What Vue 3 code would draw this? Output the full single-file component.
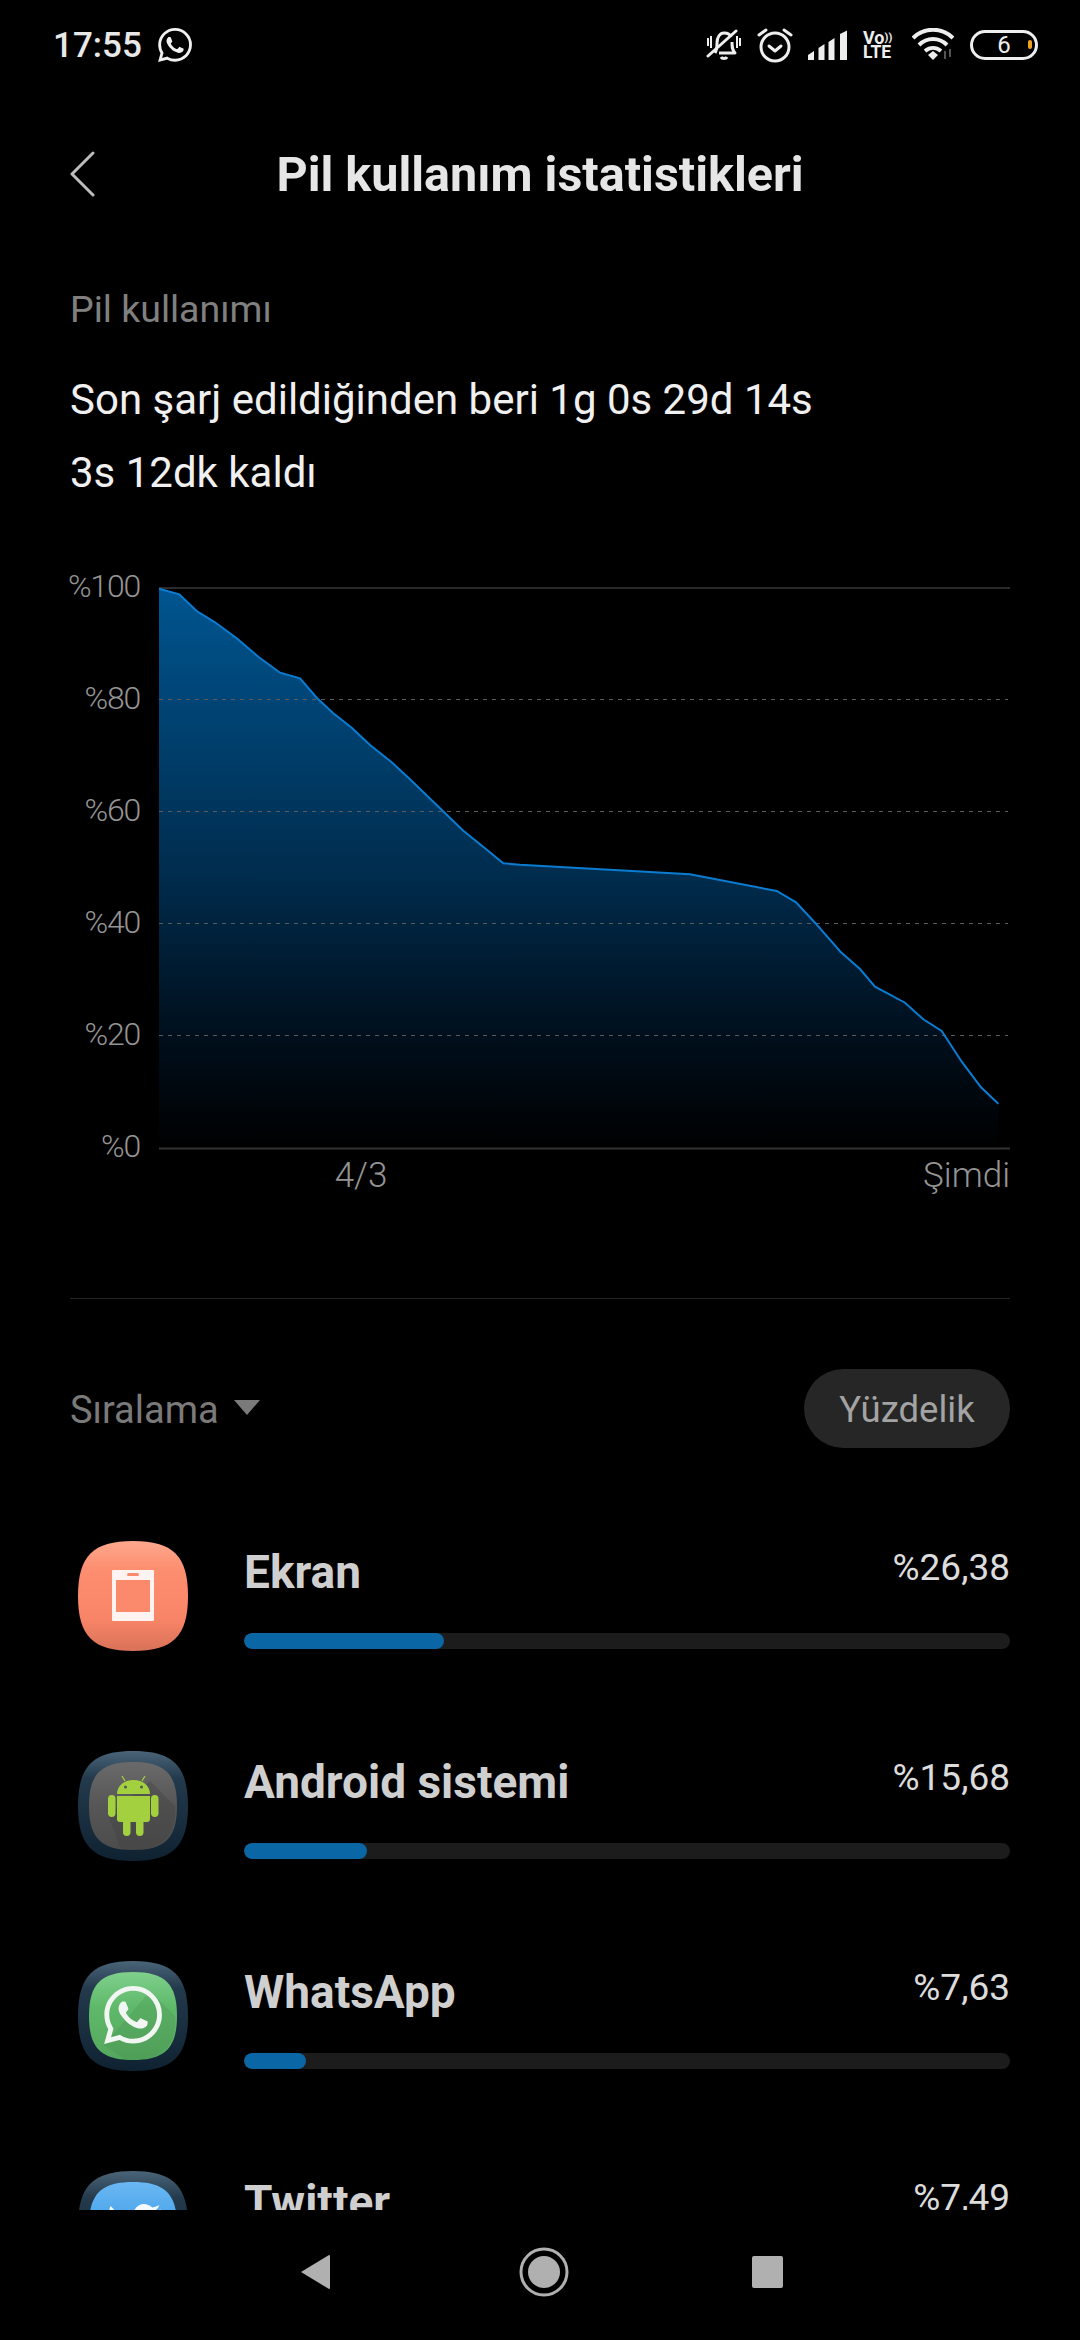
<script setup>
const linePts = '159,588.7 179.3,594.3 196.7,611 215,622.3 236.7,638.3 258.3,656.7 280,672.7 300,678.3 316.7,697.7 332.7,712.7 351.7,727.7 370,745 391.7,762.3 410,779.3 440,808.3 463.3,830.7 485,848.3 503.3,863.3 520,864.7 690,874.3 776.7,891 796,902.3 815,922.7 840.7,952 860,969 875,986.7 905,1002.7 923.3,1019.3 941.7,1031 961.7,1061.7 981,1087.3 998.3,1103.7'
const areaPts = linePts + ' 998.3,1148 159,1148'
const grid = [699.5, 811.5, 923.5, 1035.5]
const axis = [
  { t: '%100', y: 597 },
  { t: '%80', y: 709 },
  { t: '%60', y: 821 },
  { t: '%40', y: 933 },
  { t: '%20', y: 1045 },
  { t: '%0', y: 1157 }
]
const rows = [
  { name: 'Ekran', pct: '%26,38', w: 200, icon: 'screen' },
  { name: 'Android sistemi', pct: '%15,68', w: 123, icon: 'android' },
  { name: 'WhatsApp', pct: '%7,63', w: 62, icon: 'whatsapp' },
  { name: 'Twitter', pct: '%7,49', w: 60, icon: 'twitter' }
]
const sq = 'M55 0C95 0 110 15 110 55C110 95 95 110 55 110C15 110 0 95 0 55C0 15 15 0 55 0Z'
const sqIn = 'M55 11C87 11 99 23 99 55C99 87 87 99 55 99C23 99 11 87 11 55C11 23 23 11 55 11Z'
const wa = 'M17.472 14.382c-.297-.149-1.758-.867-2.03-.967-.273-.099-.471-.148-.67.15-.197.297-.767.966-.94 1.164-.173.199-.347.223-.644.075-.297-.15-1.255-.463-2.39-1.475-.883-.788-1.48-1.761-1.653-2.059-.173-.297-.018-.458.13-.606.134-.133.298-.347.446-.52.149-.174.198-.298.298-.497.099-.198.05-.371-.025-.52-.075-.149-.669-1.612-.916-2.207-.242-.579-.487-.5-.669-.51-.173-.008-.371-.01-.57-.01-.198 0-.52.074-.792.372-.272.297-1.04 1.016-1.04 2.479 0 1.462 1.065 2.875 1.213 3.074.149.198 2.096 3.2 5.077 4.487.709.306 1.262.489 1.694.625.712.227 1.36.195 1.871.118.571-.085 1.758-.719 2.006-1.413.248-.694.248-1.289.173-1.413-.074-.124-.272-.198-.57-.347m-5.421 7.403h-.004a9.87 9.87 0 01-5.031-1.378l-.361-.214-3.741.982.998-3.648-.235-.374a9.86 9.86 0 01-1.51-5.26c.001-5.45 4.436-9.884 9.888-9.884 2.64 0 5.122 1.03 6.988 2.898a9.825 9.825 0 012.893 6.994c-.003 5.45-4.437 9.884-9.885 9.884m8.413-18.297A11.815 11.815 0 0012.05 0C5.495 0 .16 5.335.157 11.892c0 2.096.547 4.142 1.588 5.945L.057 24l6.305-1.654a11.882 11.882 0 005.683 1.448h.005c6.554 0 11.89-5.335 11.893-11.893a11.821 11.821 0 00-3.48-8.413z'
const tw = 'M23.953 4.57a10 10 0 01-2.825.775 4.958 4.958 0 002.163-2.723c-.951.555-2.005.959-3.127 1.184a4.92 4.92 0 00-8.384 4.482C7.69 8.095 4.067 6.13 1.64 3.162a4.822 4.822 0 00-.666 2.475c0 1.71.87 3.213 2.188 4.096a4.904 4.904 0 01-2.228-.616v.06a4.923 4.923 0 003.946 4.827 4.996 4.996 0 01-2.212.085 4.936 4.936 0 004.604 3.417 9.867 9.867 0 01-6.102 2.105c-.39 0-.779-.023-1.17-.067a13.995 13.995 0 007.557 2.209c9.053 0 13.998-7.496 13.998-13.985 0-.21 0-.42-.015-.63A9.935 9.935 0 0024 4.59z'
</script>

<template>
  <div class="screen">
    <div class="scroll">
      <div class="status">
        <div class="status-left">
          <span class="clock">17:55</span>
          <svg class="st-wa" width="34" height="34" viewBox="0 0 24 24"><path :d="wa" fill="#f0f0f0" /></svg>
        </div>
        <div class="status-right">
          <svg width="36" height="36" viewBox="0 0 36 36" fill="none" stroke="#eee" stroke-width="3">
            <path d="M9 26c2-3 2-6 2-10 0-6 3-10 7-10 3 0 6 1 7 4M26 15c0 5 0 8 3 11H13" stroke-linejoin="round" />
            <path d="M15 30c1 2 5 2 6 0" stroke-width="3" />
            <path d="M2 29L30 4" stroke-linecap="round" />
            <path d="M2 11v8M5 9v12M31 9v12M34 11v8" stroke-width="2" />
          </svg>
          <svg width="36" height="36" viewBox="0 0 36 36" fill="none" stroke="#eee" stroke-width="3">
            <circle cx="18" cy="20" r="14" />
            <path d="M12 19l6 5 6-5" stroke-linecap="round" stroke-linejoin="round" />
            <path d="M2 8l7-5M34 8l-7-5" stroke-linecap="round" />
          </svg>
          <svg width="40" height="30" viewBox="0 0 40 30" fill="#eee">
            <path d="M0 30v-5l6-4v9zM10.500 30V18l6-4v16zM20.500 30V12l6-4v22zM32 30V4l7-3.500V30z" />
          </svg>
          <div class="volte"><span class="vo">Vo<i>))</i></span><span class="lte">LTE</span></div>
          <svg width="42" height="34" viewBox="0 0 42 34" fill="none" stroke="#eee" stroke-width="4">
            <path d="M1 10C12-1 30-1 41 10" />
            <path d="M7 17C15 9 27 9 35 17" />
            <path d="M13 23C18 19 24 19 29 23" />
            <path d="M16 27l5-4 5 4-5 5z" fill="#eee" stroke="none" />
            <path d="M33 23v8M38 21v8" stroke="#555" stroke-width="2" />
          </svg>
          <div class="battery"><span>6</span><i></i></div>
        </div>
      </div>

      <div class="header">
        <svg class="back" width="26" height="46" viewBox="0 0 26 46" fill="none" stroke="#bdbdbd" stroke-width="3" stroke-linecap="round" stroke-linejoin="round">
          <path d="M23 2L2 23l21 21" />
        </svg>
        <div class="title">Pil kullanım istatistikleri</div>
        <div></div>
      </div>

      <div class="label">Pil kullanımı</div>
      <div class="desc">
        <div>Son şarj edildiğinden beri 1g 0s 29d 14s</div>
        <div>3s 12dk kaldı</div>
      </div>

      <svg class="chart" width="1080" height="670" viewBox="0 560 1080 670">
        <defs>
          <linearGradient id="area" x1="0" y1="588" x2="0" y2="1148" gradientUnits="userSpaceOnUse">
            <stop offset="0" stop-color="#005590" />
            <stop offset="0.5" stop-color="#002d4f" />
            <stop offset="0.8" stop-color="#000f1c" />
            <stop offset="1" stop-color="#000" />
          </linearGradient>
        </defs>
        <line x1="159" y1="588" x2="1010" y2="588" stroke="#2b2b2b" stroke-width="2" />
        <polygon :points="areaPts" fill="url(#area)" />
        <line v-for="g in grid" :key="g" x1="159" :y1="g" x2="1008" :y2="g" stroke="#5a5a5a" stroke-width="1" stroke-dasharray="4 5" />
        <line x1="159" y1="1148.500" x2="1010" y2="1148.500" stroke="#333" stroke-width="2" />
        <polyline :points="linePts" fill="none" stroke="#0a7cd2" stroke-width="2" />
        <text v-for="a in axis" :key="a.t" x="140" :y="a.y" text-anchor="end" class="axis">{{ a.t }}</text>
        <text x="361" y="1187" text-anchor="middle" class="axis-x">4/3</text>
        <text x="1010" y="1187" text-anchor="end" class="axis-x">Şimdi</text>
      </svg>

      <div class="divider"></div>

      <div class="sort">
        <div class="sort-left">
          <span>Sıralama</span>
          <i class="tri"></i>
        </div>
        <div class="pill">Yüzdelik</div>
      </div>

      <div class="list">
        <div v-for="r in rows" :key="r.name" class="row">
          <svg class="app" width="110" height="110" viewBox="0 0 110 110">
            <defs>
              <linearGradient id="gS" x1="0" y1="0" x2="0" y2="1">
                <stop offset="0" stop-color="#fea88d" />
                <stop offset="0.25" stop-color="#fd8e70" />
                <stop offset="0.7" stop-color="#f98568" />
                <stop offset="1" stop-color="#d87258" />
              </linearGradient>
              <linearGradient id="gF" x1="0" y1="0" x2="0" y2="1">
                <stop offset="0" stop-color="#4a6478" />
                <stop offset="0.25" stop-color="#233a4c" />
                <stop offset="1" stop-color="#0f2232" />
              </linearGradient>
              <linearGradient id="gW" x1="0" y1="0" x2="0" y2="1">
                <stop offset="0" stop-color="#7fd08c" />
                <stop offset="0.4" stop-color="#5fb96a" />
                <stop offset="1" stop-color="#54a75d" />
              </linearGradient>
              <linearGradient id="gA" x1="0" y1="0" x2="0" y2="1">
                <stop offset="0" stop-color="#6a6a6a" />
                <stop offset="0.5" stop-color="#565656" />
                <stop offset="1" stop-color="#4c4c4c" />
              </linearGradient>
              <linearGradient id="gT" x1="0" y1="0" x2="0" y2="1">
                <stop offset="0" stop-color="#6ab8f4" />
                <stop offset="0.4" stop-color="#4ea6ea" />
              </linearGradient>
            </defs>
            <template v-if="r.icon === 'screen'">
              <path :d="sq" fill="url(#gS)" />
              <path d="M35 29h40a1 1 0 011 1v49a1 1 0 01-1 1H35a1 1 0 01-1-1V30a1 1 0 011-1z" fill="#fdf4f1" />
              <rect x="38" y="39" width="34" height="32" fill="#fb8a6c" />
              <rect x="49" y="32" width="12" height="3" rx="1.500" fill="#fb8a6c" />
            </template>
            <template v-else-if="r.icon === 'android'">
              <path :d="sq" fill="url(#gF)" />
              <path :d="sqIn" fill="url(#gA)" />
              <path d="M72 30L97 55C99 80 88 99 55 99C50 99 46 98 42 97L38 84L30 64z" fill="#3f3f3f" opacity="0.35" />
              <g fill="#a3d03f">
                <path d="M39 43c0-8 7-14 16.500-14S72 35 72 43z" />
                <path d="M39 45h33v23a3 3 0 01-3 3H42a3 3 0 01-3-3z" />
                <rect x="30" y="44" width="7.500" height="22" rx="3.700" />
                <rect x="73" y="44" width="7.500" height="22" rx="3.700" />
                <rect x="45" y="68" width="7.500" height="17" rx="3.700" />
                <rect x="58" y="68" width="7.500" height="17" rx="3.700" />
              </g>
              <path d="M47 30l-3-5M64 30l3-5" stroke="#a3d03f" stroke-width="1.200" />
              <circle cx="47.500" cy="36" r="1.500" fill="#555" />
              <circle cx="63.500" cy="36" r="1.500" fill="#555" />
            </template>
            <template v-else-if="r.icon === 'whatsapp'">
              <path :d="sq" fill="url(#gF)" />
              <path :d="sqIn" fill="url(#gW)" />
              <path d="M72 30L97 55C99 80 88 99 55 99C50 99 44 97 40 94L26 84z" fill="#3b7c44" opacity="0.18" />
              <path :d="wa" fill="#f2f6f2" transform="translate(26 25) scale(2.42)" />
            </template>
            <template v-else>
              <path :d="sq" fill="url(#gF)" />
              <path :d="sqIn" fill="url(#gT)" />
              <path :d="tw" fill="#f4f9fd" transform="translate(29 28) scale(2.25)" />
            </template>
          </svg>
          <div class="main">
            <div class="top">
              <span class="name">{{ r.name }}</span>
              <span class="pct">{{ r.pct }}</span>
            </div>
            <div class="track"><div class="fill" :style="{ width: r.w + 'px' }"></div></div>
          </div>
        </div>
      </div>
    </div>

    <div class="nav">
      <svg class="nav-back" width="31" height="36" viewBox="0 0 31 36"><path d="M29 1a1 1 0 011 1v32a1 1 0 01-1 1L1 18z" fill="#b0b0b0" /></svg>
      <svg class="nav-home" width="50" height="50" viewBox="0 0 50 50">
        <circle cx="25" cy="25" r="23" fill="none" stroke="#b0b0b0" stroke-width="3" />
        <circle cx="25" cy="25" r="16" fill="#b0b0b0" />
      </svg>
      <div class="nav-sq"></div>
    </div>
  </div>
</template>

<style>
html, body { margin: 0; background: #000; }
</style>

<style scoped>
.screen {
  width: 1080px;
  height: 2340px;
  background: #000;
  display: flex;
  flex-direction: column;
  overflow: hidden;
  font-family: Roboto, "Noto Sans", sans-serif;
}
.scroll { height: 2210px; overflow: hidden; flex: none; }
.status {
  height: 90px;
  display: flex;
  align-items: center;
  justify-content: space-between;
  padding: 0 42px 0 53px;
}
.status-left { display: flex; align-items: center; gap: 16px; }
.clock { font-size: 35px; font-weight: 500; color: #e8e8e8; }
.status-right { display: flex; align-items: center; gap: 15px; }
.volte { width: 34px; display: flex; flex-direction: column; color: #eee; font-weight: 700; line-height: 15px; }
.vo { font-size: 18px; white-space: nowrap; }
.vo i { font-size: 11px; font-style: normal; vertical-align: 3px; }
.lte { font-size: 17.500px; }
.battery {
  width: 68px;
  height: 30px;
  box-sizing: border-box;
  border: 3px solid #eee;
  border-radius: 15px;
  display: flex;
  align-items: center;
  justify-content: center;
  position: relative;
  margin-left: 1px;
  color: #eee;
  font-size: 24px;
  font-weight: 400;
  line-height: 1;
}
.battery i {
  position: absolute;
  right: 3px;
  top: 7px;
  width: 4px;
  height: 9px;
  border-radius: 2px;
  background: #f0a020;
}
.header {
  height: 168px;
  display: grid;
  grid-template-columns: 1fr auto 1fr;
  align-items: center;
  padding: 0 70px;
}
.title { font-size: 48.500px; font-weight: 700; color: #e6e6e6; }
.label {
  margin: 26px 70px 0;
  font-size: 37.500px;
  line-height: 50px;
  color: #808080;
}
.desc {
  margin: 29px 70px 0;
  font-size: 42px;
  line-height: 73px;
  color: #f0f0f0;
}
.chart { display: block; margin-top: 51px; }
.axis { font-size: 32px; font-family: Roboto, sans-serif; font-weight: 300; fill: #949494; letter-spacing: -1.200px; }
.axis-x { font-size: 35px; font-family: Roboto, sans-serif; font-weight: 300; fill: #949494; }
.divider { height: 1px; background: #222; margin: 68px 70px 0 70px; }
.sort {
  margin: 70px 70px 0 70px;
  height: 79px;
  display: flex;
  align-items: center;
  justify-content: space-between;
}
.sort-left { display: flex; align-items: center; gap: 15px; padding-top: 3px; font-size: 38px; color: #7a7a7a; }
.tri {
  display: block;
  width: 0;
  height: 0;
  border-left: 13px solid transparent;
  border-right: 13px solid transparent;
  border-top: 15px solid #7a7a7a;
  margin-top: -6px;
}
.pill {
  width: 206px;
  height: 79px;
  box-sizing: border-box;
  padding-top: 2px;
  border-radius: 40px;
  background: #262626;
  color: #a3a3a3;
  font-size: 36.500px;
  display: flex;
  align-items: center;
  justify-content: center;
}
.list { margin-top: 93px; padding: 0 70px 0 78px; }
.row { height: 210px; display: flex; align-items: flex-start; gap: 56px; }
.app { flex: none; display: block; }
.main { flex: 1; }
.top { display: flex; justify-content: space-between; align-items: flex-start; height: 60px; }
.name { font-size: 46px; line-height: 63px; font-weight: 700; color: #cfcfcf; }
.pct { font-size: 37px; line-height: 54px; color: #dcdcdc; }
.track { margin-top: 32px; height: 16px; border-radius: 8px; background: #1c1c1c; overflow: hidden; }
.fill { height: 16px; border-radius: 8px; background: #0b66a6; }
.nav {
  height: 130px;
  box-sizing: border-box;
  display: flex;
  align-items: center;
  padding: 0 0 6px 300px;
}
.nav-back { margin-right: 188px; flex: none; }
.nav-home { margin-right: 183px; flex: none; }
.nav-sq { width: 31px; height: 32px; border-radius: 2px; background: #b0b0b0; flex: none; }
</style>
